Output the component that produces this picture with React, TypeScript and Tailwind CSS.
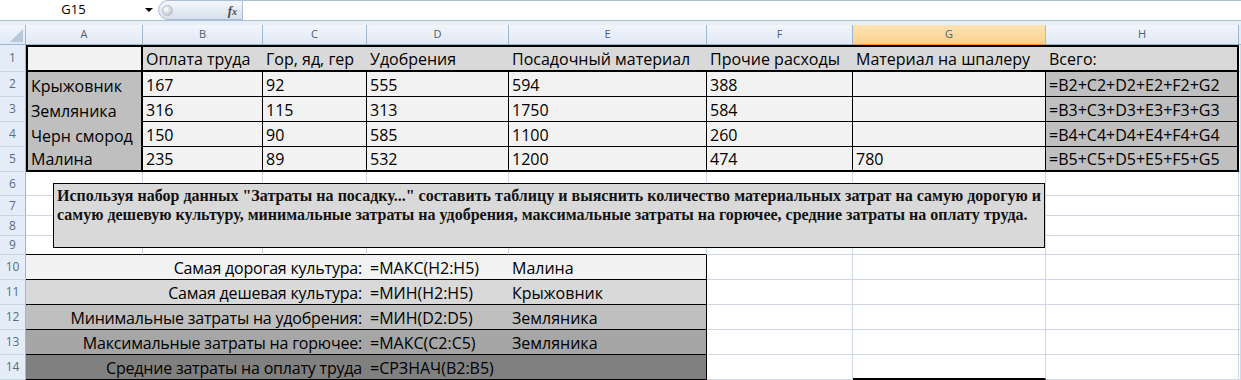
import { Fragment } from 'react'

const letters = ['A', 'B', 'C', 'D', 'E', 'F', 'G', 'H']

const crops = [
  { name: 'Крыжовник', v: ['167', '92', '555', '594', '388', ''] },
  { name: 'Земляника', v: ['316', '115', '313', '1750', '584', ''] },
  { name: 'Черн смород', v: ['150', '90', '585', '1100', '260', ''] },
  { name: 'Малина', v: ['235', '89', '532', '1200', '474', '780'] },
]

const heads = ['Оплата труда', 'Гор, яд, гер', 'Удобрения', 'Посадочный материал', 'Прочие расходы', 'Материал на шпалеру']

const summary = [
  { label: 'Самая дорогая культура:', f: '=МАКС(H2:H5)', res: 'Малина', bg: 'bg-[#f2f2f2]' },
  { label: 'Самая дешевая культура:', f: '=МИН(H2:H5)', res: 'Крыжовник', bg: 'bg-[#d9d9d9]' },
  { label: 'Минимальные затраты на удобрения:', f: '=МИН(D2:D5)', res: 'Земляника', bg: 'bg-[#bfbfbf]' },
  { label: 'Максимальные затраты на горючее:', f: '=МАКС(C2:C5)', res: 'Земляника', bg: 'bg-[#a6a6a6]' },
  { label: 'Средние затраты на оплату труда', f: '=СРЗНАЧ(B2:B5)', res: '', bg: 'bg-[#808080]' },
]

function RowHead({ n }: { n: number }) {
  return (
    <div className="flex items-center justify-center border-r border-b border-r-[#9eb6ce] border-b-[#c9d5e4] bg-[#e4ecf7]
                    text-[12px] text-[#5b6c82]">
      {n}
    </div>
  )
}

function Blank({ className = '' }: { className?: string }) {
  return <div className={`border-r border-b border-[#d0d7e5] bg-white ${className}`} />
}

function Cell({ className, children }: { className: string; children?: React.ReactNode }) {
  return (
    <div className={`flex items-end whitespace-nowrap px-[3px] text-[16px] leading-[22px] ${className}`}>
      {children}
    </div>
  )
}

function FormulaBar() {
  return (
    <div className="flex h-[21px] border-b border-[#a9bdd5] bg-white">
      <div className="flex w-[158px] items-center">
        <span className="flex-1 pl-[2px] text-center text-[13px] text-black">G15</span>
        <span className="mr-[5px] h-0 w-0 border-x-[4px] border-t-[4px] border-x-transparent border-t-black" />
      </div>
      <div className="flex w-[85px] items-center justify-between rounded-l-full border border-[#a9bdd5]
                      bg-gradient-to-b from-[#f4f7fb] to-[#d6e0ec] pl-[3px] pr-[5px]">
        <div className="size-[11px] rounded-full border border-[#b5bec9]
                        bg-[radial-gradient(circle_at_35%_35%,#ffffff,#c4cbd3_70%)]" />
        <span className="font-['Liberation_Serif',serif] text-[13px] font-bold italic leading-none text-[#4a4a4a]">
          f<span className="text-[10px]">x</span>
        </span>
      </div>
      <div className="flex-1 border-t border-[#a9bdd5]" />
    </div>
  )
}

export default function App() {
  return (
    <div className="relative h-[380px] w-[1241px] overflow-hidden bg-white font-['Open_Sans',sans-serif] text-black">
      <FormulaBar />
      <div className="h-[4px] bg-[#e9eff7]" />

      <div className="grid grid-cols-[26px_117px_120px_104px_142px_198px_146px_193px_193px_1fr]
                      grid-rows-[20px_27px_25px_25px_25px_25px_24px_20px_20px_19px_25px_25px_25px_25px_25px]">
        {/* column headers */}
        <div className="flex items-end justify-end border-r border-b border-[#9eb6ce] bg-gradient-to-b from-[#f1f5fb] to-[#e0e9f5] p-[2px]">
          <svg width="13" height="13" viewBox="0 0 13 13">
            <polygon points="13,0 13,13 0,13" fill="#b7c8dc" />
          </svg>
        </div>
        {letters.map((l) =>
          l === 'G' ? (
            <div key={l} className="flex items-center justify-center border-r border-b border-r-[#e3b56b] border-b-[#f29536]
                                    bg-gradient-to-b from-[#fde4b3] to-[#f9d08c] text-[11px] text-[#4d5e74]">
              {l}
            </div>
          ) : (
            <div key={l} className="flex items-center justify-center border-r border-b border-[#9eb6ce]
                                    bg-gradient-to-b from-[#f1f5fb] to-[#e0e9f5] text-[11px] text-[#4d5e74]">
              {l}
            </div>
          )
        )}
        <div className="border-b border-[#9eb6ce] bg-[#e4ecf7]" />

        {/* row 1 */}
        <RowHead n={1} />
        <Cell className="border-2 border-black bg-[#f2f2f2]" />
        {heads.map((h) => (
          <Cell key={h} className="border-y-2 border-black bg-[#d9d9d9]">{h}</Cell>
        ))}
        <Cell className="border-y-2 border-r-2 border-black bg-[#d9d9d9]">Всего:</Cell>
        <Blank />

        {/* rows 2-5 */}
        {crops.map((c, i) => {
          const last = i === crops.length - 1
          const n = i + 2
          return (
            <Fragment key={c.name}>
              <RowHead n={n} />
              <Cell className={last ? 'border-x-2 border-b-2 border-black bg-[#bfbfbf]' : 'border-x-2 border-black bg-[#bfbfbf]'}>
                {c.name}
              </Cell>
              {c.v.map((v, j) => (
                <Cell key={j} className={last ? 'border-r border-b-2 border-black bg-[#f2f2f2]' : 'border-r border-b border-black bg-[#f2f2f2]'}>
                  {v}
                </Cell>
              ))}
              <Cell className={last ? 'border-r-2 border-b-2 border-black bg-[#bfbfbf]' : 'border-r-2 border-b border-black bg-[#bfbfbf]'}>
                =B{n}+C{n}+D{n}+E{n}+F{n}+G{n}
              </Cell>
              <Blank />
            </Fragment>
          )
        })}

        {/* rows 6-9 */}
        {[6, 7, 8, 9].map((n) => (
          <Fragment key={n}>
            <RowHead n={n} />
            {letters.map((l, j) =>
              n === 9 && j < 5 ? <Blank key={l} className="border-b-black" /> : <Blank key={l} />
            )}
            <Blank />
          </Fragment>
        ))}

        {/* rows 10-14 */}
        {summary.map((r, i) => (
          <Fragment key={r.label}>
            <RowHead n={10 + i} />
            <Cell className={`col-span-3 justify-end border-b border-black pr-[5px] tracking-[-0.2px] ${r.bg}`}>{r.label}</Cell>
            <Cell className={`border-b border-black ${r.bg}`}>{r.f}</Cell>
            <Cell className={`border-r border-b border-black ${r.bg}`}>{r.res}</Cell>
            <Blank />
            {i === 4 ? <Blank className="border-b-2 border-b-black" /> : <Blank />}
            <Blank />
            <Blank />
          </Fragment>
        ))}
      </div>

      {/* text box shape lying over rows 6-9 */}
      <div className="absolute top-[183px] left-[53px] h-[65px] w-[992px] border border-black bg-[#d9d9d9]
                      px-[3px] pt-[2px] font-['Liberation_Serif',serif] text-[16px] font-bold leading-[19px] text-[#111]">
        <p className="text-justify [text-align-last:justify]">
          Используя набор данных "Затраты на посадку..." составить таблицу и выяснить количество материальных затрат на самую дорогую и
        </p>
        <p>
          самую дешевую культуру, минимальные затраты на удобрения, максимальные затраты на горючее, средние затраты на оплату труда.
        </p>
      </div>
    </div>
  )
}
